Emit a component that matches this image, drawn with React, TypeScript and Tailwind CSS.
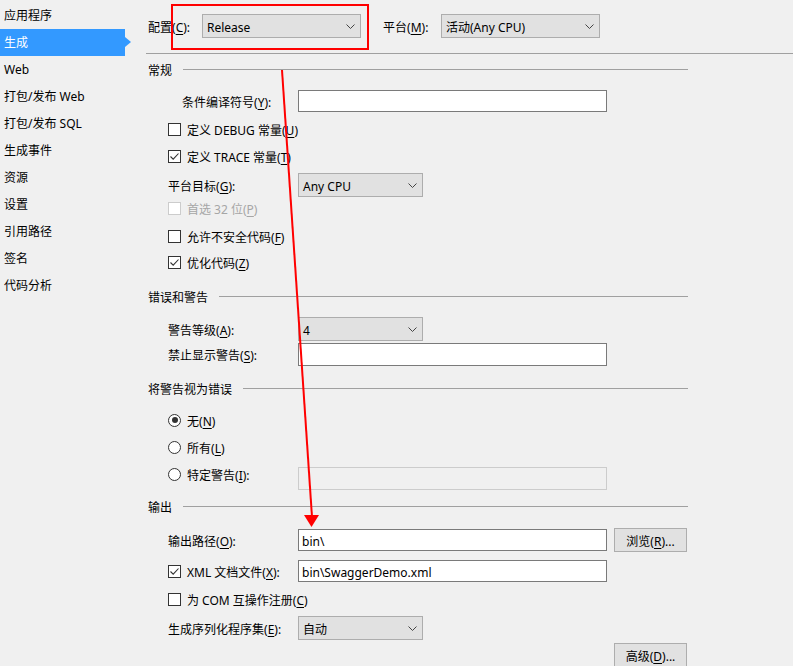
import React from 'react';

const FONT = { fontFamily: '"Noto Sans", "Noto Sans CJK SC", sans-serif' };

const NAV = ['应用程序', '生成', 'Web', '打包/发布 Web', '打包/发布 SQL', '生成事件', '资源', '设置', '引用路径', '签名', '代码分析'];

// label with an underlined access key, e.g. 配置(C):
function Acc({ text, k, tail = '' }: { text: string; k: string; tail?: string }) {
  return (
    <span className="inline-block pt-[3px]">
      {text}(<span className="underline underline-offset-2 decoration-1">{k}</span>){tail}
    </span>
  );
}

function Chevron() {
  return (
    <svg width="9" height="5" viewBox="0 0 9 5">
      <path d="M0.5 0.5 L4.5 4.5 L8.5 0.5" fill="none" stroke="#444" strokeWidth="1" />
    </svg>
  );
}

function Select({ value, w }: { value: string; w: string }) {
  return (
    <div className={`${w} h-[24px] border border-[#adadad] bg-[#e1e1e1] flex items-center justify-between pl-[4px] pr-[5px]`}>
      <span className="pt-[3px]">{value}</span>
      <Chevron />
    </div>
  );
}

function Input({ value = '', disabled = false, h = 'h-[22px]' }: { value?: string; disabled?: boolean; h?: string }) {
  return (
    <div
      className={`w-[309px] ${h} border flex items-center pl-[3px] ${
        disabled ? 'border-[#cccccc] bg-[#f0f0f0]' : 'border-[#7a7a7a] bg-white'
      }`}
    >
      <span className="pt-[3px]">{value}</span>
    </div>
  );
}

function Button({ children }: { children: React.ReactNode }) {
  return (
    <div className="w-[73px] h-[24px] border border-[#adadad] bg-[#e1e1e1] flex items-center justify-center shrink-0">
      {children}
    </div>
  );
}

function Checkbox({ checked = false, disabled = false }: { checked?: boolean; disabled?: boolean }) {
  return (
    <div className={`w-[13px] h-[13px] border bg-white flex items-center justify-center shrink-0 ${disabled ? 'border-[#cccccc]' : 'border-[#333333]'}`}>
      {checked && (
        <svg width="11" height="11" viewBox="0 0 11 11">
          <path d="M1.5 5.5 L4.2 8.2 L9.5 2.5" fill="none" stroke="#333" strokeWidth="1.1" />
        </svg>
      )}
    </div>
  );
}

function Radio({ checked = false }: { checked?: boolean }) {
  return (
    <div className="w-[13px] h-[13px] rounded-full border border-[#333333] bg-white flex items-center justify-center shrink-0">
      {checked && <div className="w-[6px] h-[6px] rounded-full bg-[#333333]" />}
    </div>
  );
}

function Heading({ title, mt }: { title: string; mt: string }) {
  return (
    <div className={`${mt} h-[16px] flex items-center`}>
      <span className="pl-[2px] pt-[3px]">{title}</span>
      <div className="flex-1 ml-[11px] h-px bg-[#a0a0a0]" />
    </div>
  );
}

export default function App() {
  return (
    <div
      className="relative w-[793px] h-[666px] overflow-hidden bg-[#f0f0f0] text-black text-[12px] leading-[16px] flex"
      style={FONT}
    >
      {/* Sidebar */}
      <div className="w-[131px] shrink-0 pt-[2px]">
        {NAV.map((item, i) => (
          <div key={item} className="relative h-[27px]">
            <div className={`w-[125px] h-[27px] flex items-center pl-[4px] ${i === 1 ? 'bg-[#3399ff] text-white' : ''}`}>{item}</div>
            {i === 1 && (
              <div className="absolute left-[125px] top-[8px] w-0 h-0 border-y-[5.5px] border-y-transparent border-l-[6px] border-l-[#3399ff]" />
            )}
          </div>
        ))}
      </div>

      {/* Main */}
      <div className="flex-1 ml-[15px]">
        {/* Configuration row */}
        <div className="pt-[14px] flex items-center h-[38px]">
          <div className="w-[56px] pl-[2px]">
            <Acc text="配置" k="C" tail=":" />
          </div>
          <Select value="Release" w="w-[159px]" />
          <div className="w-[58px] ml-[22px]">
            <Acc text="平台" k="M" tail=":" />
          </div>
          <Select value="活动(Any CPU)" w="w-[159px]" />
        </div>
        <div className="mt-[15px] h-px bg-[#a0a0a0]" />

        <div className="w-[542px]">
          {/* 常规 */}
          <Heading title="常规" mt="mt-[7px]" />
          <div className="mt-[13px] pl-[22px] h-[22px] flex items-center">
            <div className="w-[130px] pl-[14px]">
              <Acc text="条件编译符号" k="Y" tail=":" />
            </div>
            <Input />
          </div>
          <div className="mt-[9px] pl-[22px] h-[16px] flex items-center gap-[6px]">
            <Checkbox />
            <Acc text="定义 DEBUG 常量" k="U" />
          </div>
          <div className="mt-[11px] pl-[22px] h-[16px] flex items-center gap-[6px]">
            <Checkbox checked />
            <Acc text="定义 TRACE 常量" k="T" />
          </div>
          <div className="mt-[9px] pl-[22px] h-[24px] flex items-center">
            <div className="w-[130px]">
              <Acc text="平台目标" k="G" tail=":" />
            </div>
            <Select value="Any CPU" w="w-[125px]" />
          </div>
          <div className="mt-[3px] pl-[22px] h-[16px] flex items-center gap-[6px] text-[#a6a6a6]">
            <Checkbox disabled />
            <Acc text="首选 32 位" k="P" />
          </div>
          <div className="mt-[12px] pl-[22px] h-[16px] flex items-center gap-[6px]">
            <Checkbox />
            <Acc text="允许不安全代码" k="F" />
          </div>
          <div className="mt-[10px] pl-[22px] h-[16px] flex items-center gap-[6px]">
            <Checkbox checked />
            <Acc text="优化代码" k="Z" />
          </div>

          {/* 错误和警告 */}
          <Heading title="错误和警告" mt="mt-[18px]" />
          <div className="mt-[13px] pl-[22px] h-[24px] flex items-center">
            <div className="w-[130px]">
              <Acc text="警告等级" k="A" tail=":" />
            </div>
            <Select value="4" w="w-[125px]" />
          </div>
          <div className="mt-[2px] pl-[22px] h-[23px] flex items-center">
            <div className="w-[130px]">
              <Acc text="禁止显示警告" k="S" tail=":" />
            </div>
            <Input h="h-[23px]" />
          </div>

          {/* 将警告视为错误 */}
          <Heading title="将警告视为错误" mt="mt-[14px]" />
          <div className="mt-[16px] pl-[22px] h-[16px] flex items-center gap-[6px]">
            <Radio checked />
            <Acc text="无" k="N" />
          </div>
          <div className="mt-[11px] pl-[22px] h-[16px] flex items-center gap-[6px]">
            <Radio />
            <Acc text="所有" k="L" />
          </div>
          <div className="mt-[12px] pl-[22px] h-[23px] flex items-start">
            <div className="w-[130px] h-[14px] flex items-center gap-[6px]">
              <Radio />
              <Acc text="特定警告" k="I" tail=":" />
            </div>
            <Input disabled h="h-[23px]" />
          </div>

          {/* 输出 */}
          <Heading title="输出" mt="mt-[8px]" />
          <div className="mt-[14px] pl-[22px] h-[24px] flex items-center">
            <div className="w-[130px]">
              <Acc text="输出路径" k="O" tail=":" />
            </div>
            <Input value="bin\" />
            <div className="ml-[7px]">
              <Button>
                <Acc text="浏览" k="R" tail="..." />
              </Button>
            </div>
          </div>
          <div className="mt-[8px] pl-[22px] h-[22px] flex items-center">
            <div className="w-[130px] flex items-center gap-[6px]">
              <Checkbox checked />
              <Acc text="XML 文档文件" k="X" tail=":" />
            </div>
            <Input value="bin\SwaggerDemo.xml" />
          </div>
          <div className="mt-[9px] pl-[22px] h-[16px] flex items-center gap-[6px]">
            <Checkbox />
            <Acc text="为 COM 互操作注册" k="C" />
          </div>
          <div className="mt-[9px] pl-[22px] h-[24px] flex items-center">
            <div className="w-[130px]">
              <Acc text="生成序列化程序集" k="E" tail=":" />
            </div>
            <Select value="自动" w="w-[125px]" />
          </div>
          <div className="mt-[3px] ml-[468px]">
            <Button>
              <Acc text="高级" k="D" tail="..." />
            </Button>
          </div>
        </div>
      </div>

      {/* Annotation overlay */}
      <div className="absolute left-[171px] top-[4px] w-[198px] h-[46px] border-2 border-[#ff0000] pointer-events-none" />
      <svg className="absolute left-0 top-0 pointer-events-none" width="793" height="666">
        <line x1="282" y1="70" x2="312" y2="517" stroke="#ff0000" strokeWidth="2" />
        <polygon points="304,515 319,515 311.5,527" fill="#ff0000" />
      </svg>
    </div>
  );
}
